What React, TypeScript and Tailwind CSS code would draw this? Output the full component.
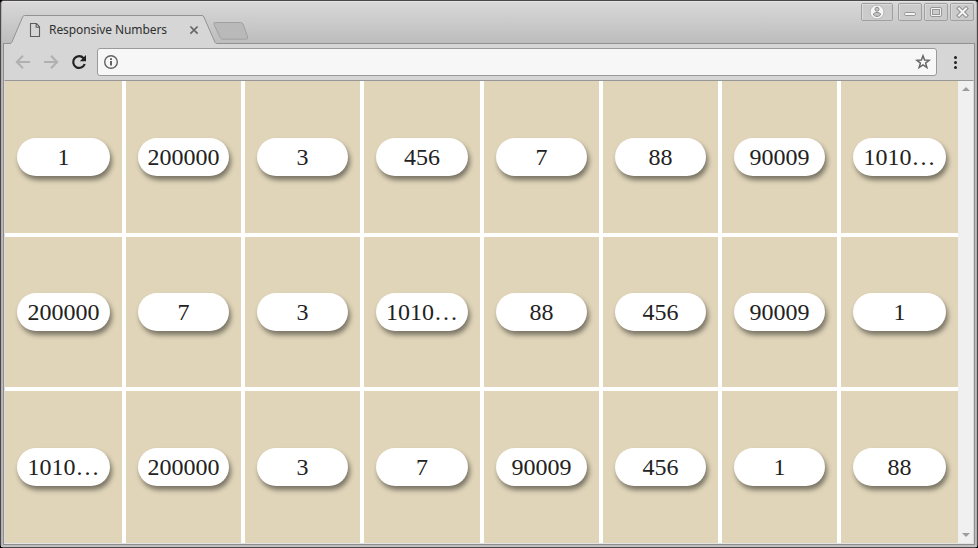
import React from "react";

const rows = [
  ["1", "200000", "3", "456", "7", "88", "90009", "1010…"],
  ["200000", "7", "3", "1010…", "88", "456", "90009", "1"],
  ["1010…", "200000", "3", "7", "90009", "456", "1", "88"],
];

function TitleBar() {
  return (
    <div className="relative h-[41px] shrink-0">
      <svg className="absolute left-0 top-0" width="974" height="42" viewBox="2 2 974 42" fill="none">
        <path d="M3 43.5H11L22.6 16.5Q23.2 15.5 24.5 15.5H202Q203.3 15.5 203.9 16.5L215.8 43.5H975V45H3Z" fill="#d6d6d6" />
        <path d="M3 43.5H10Q11.2 43.5 11.8 42.3L22.6 17Q23.2 15.5 24.5 15.5H202Q203.3 15.5 203.9 17L215 42.3Q215.6 43.5 216.8 43.5H975" stroke="#929292" />
        <path d="M215.2 22.5H240.5Q242.2 22.5 243 24L247.7 37Q248.2 39.2 246 39.2H223Q221 39.2 220.2 37.5L214 24.5Q213.4 22.5 215.2 22.5Z" fill="#b9b9b9" stroke="#a1a1a1" />
        <path d="M30.5 23.5H36.5L39.5 26.8V36.5H30.5Z M36.2 23.5V27.3H39.5" stroke="#5c5c5c" strokeWidth="1.1" />
        <path d="M190.4 26.5L197.6 33.6M197.6 26.5L190.4 33.6" stroke="#666" strokeWidth="1.7" />
        <g stroke="#a0a0a0">
          <rect x="861.5" y="3.5" width="31" height="17" rx="1.5" fill="#cbcbcb" />
          <rect x="898.5" y="3.5" width="23" height="17" rx="1.5" fill="#cbcbcb" />
          <rect x="924.5" y="3.5" width="23" height="17" rx="1.5" fill="#cbcbcb" />
          <rect x="950.5" y="3.5" width="23" height="17" rx="1.5" fill="#cbcbcb" />
        </g>
        <g stroke="#dadada">
          <path d="M862.5 19.5V4.5H891.5M899.5 19.5V4.5H920.5M925.5 19.5V4.5H946.5M951.5 19.5V4.5H972.5" />
        </g>
        <circle cx="877" cy="12" r="6.9" fill="#f5f5f5" stroke="#a5a5a5" strokeWidth="0.7" />
        <circle cx="877" cy="9.2" r="2" fill="#c4c4c4" stroke="#8c8c8c" />
        <path d="M873.2 14Q877 10.8 880.8 14Q880 16.5 877 16.5Q874 16.5 873.2 14Z" fill="#c4c4c4" stroke="#8c8c8c" />
        <rect x="904.5" y="12.5" width="11" height="3" rx="1.3" fill="#f4f4f4" stroke="#969696" />
        <rect x="930.5" y="7.5" width="11" height="9" rx="1.5" fill="#f4f4f4" stroke="#969696" />
        <rect x="932.5" y="9.5" width="7" height="5" fill="#cbcbcb" stroke="#969696" />
        <path d="M959 8.5L966 15.5M966 8.5L959 15.5" stroke="#8f8f8f" strokeWidth="4" strokeLinecap="square" />
        <path d="M959 8.5L966 15.5M966 8.5L959 15.5" stroke="#f4f4f4" strokeWidth="2" strokeLinecap="square" />
      </svg>
      <span className="absolute left-[47px] top-[19px] whitespace-nowrap font-['Noto_Sans',sans-serif] text-[12px] leading-[18px] tracking-[-0.08px] text-[#303030]">
        Responsive Numbers
      </span>
    </div>
  );
}

function Toolbar() {
  return (
    <div className="flex h-[37px] shrink-0 items-center bg-[#d6d6d6] pt-px">
      <svg className="shrink-0" width="93" height="36" viewBox="4 44 93 36" fill="none">
        <path d="M30 62H17M23 55.8L16.8 62L23 68.2" stroke="#b0b0b0" strokeWidth="2" />
        <path d="M44 62H57M51 55.8L57.2 62L51 68.2" stroke="#b0b0b0" strokeWidth="2" />
        <path d="M83.6 58.2A5.9 5.9 0 1 0 84.7 64" stroke="#222" strokeWidth="2.2" />
        <path d="M86 55V61.2H79.8Z" fill="#222" />
      </svg>
      <div className="flex h-[28px] w-[840px] shrink-0 items-center justify-between rounded-[3px] border border-[#9a9a9a] bg-[#f7f7f7] px-[5px]">
        <svg width="16" height="16" viewBox="0 0 16 16" fill="none">
          <circle cx="8" cy="8" r="6.3" stroke="#626262" strokeWidth="1.4" />
          <path d="M8 7V11.5M8 4.3V6" stroke="#626262" strokeWidth="2" />
        </svg>
        <svg width="16" height="16" viewBox="0 0 16 16" fill="none">
          <path d="M8 1.8L9.6 6.1L14.2 6.3L10.6 9.1L11.9 13.6L8 11L4.1 13.6L5.4 9.1L1.8 6.3L6.4 6.1Z" stroke="#666" strokeWidth="1.5" />
        </svg>
      </div>
      <div className="ml-[17px] flex flex-col gap-[2px]">
        <i className="size-[3px] rounded-full bg-[#222]" />
        <i className="size-[3px] rounded-full bg-[#222]" />
        <i className="size-[3px] rounded-full bg-[#222]" />
      </div>
    </div>
  );
}

function Grid() {
  return (
    <main className="grid w-[953px] shrink-0 grid-cols-[117px_115px_115px_116px_115px_115px_115px_117px] grid-rows-[152px_150px_152px] gap-1 bg-white">
      {rows.flatMap((row, r) =>
        row.map((value, c) => (
          <div key={`${r}-${c}`} className="flex items-center bg-[#e0d5b9] px-[12px]">
            <div className="h-[38px] w-full whitespace-nowrap rounded-[20px] bg-white text-center font-['Liberation_Serif',serif] text-[24px] leading-[38px] text-[#222] shadow-[2px_4px_5px_rgba(0,0,0,0.46)]">
              {value}
            </div>
          </div>
        )),
      )}
    </main>
  );
}

function Scrollbar() {
  return (
    <div className="flex w-[15px] shrink-0 flex-col items-center justify-between bg-[#f0f0f0] pb-[6px] pt-[6px]">
      <svg width="8" height="4" viewBox="0 0 8 4"><path d="M0 4L4 0L8 4Z" fill="#9d9d9d" /></svg>
      <svg width="8" height="4" viewBox="0 0 8 4"><path d="M0 0L4 4L8 0Z" fill="#9d9d9d" /></svg>
    </div>
  );
}

export default function App() {
  return (
    <div className="h-[548px] w-[978px] overflow-hidden bg-black">
      <div className="h-full rounded-[4px] border border-[#4b4648] bg-[#bcbcbc]">
        <div className="flex h-full flex-col rounded-t-[3px] border border-t-[#e4e4e4] border-x-[#b4b0b2] border-b-[#c4c4c4] bg-linear-to-b from-[#d8d8d8] to-[#bcbcbc] to-[42px]">
          <TitleBar />
          <div className="mx-px flex h-[502px] flex-col border border-t-0 border-[#8e8e8e]">
            <Toolbar />
            <div className="flex h-[464px] border-b border-l border-r border-t border-b-[#e4e4e4] border-l-[#dadada] border-r-[#dadada] border-t-[#979797]">
              <Grid />
              <Scrollbar />
            </div>
          </div>
        </div>
      </div>
    </div>
  );
}
